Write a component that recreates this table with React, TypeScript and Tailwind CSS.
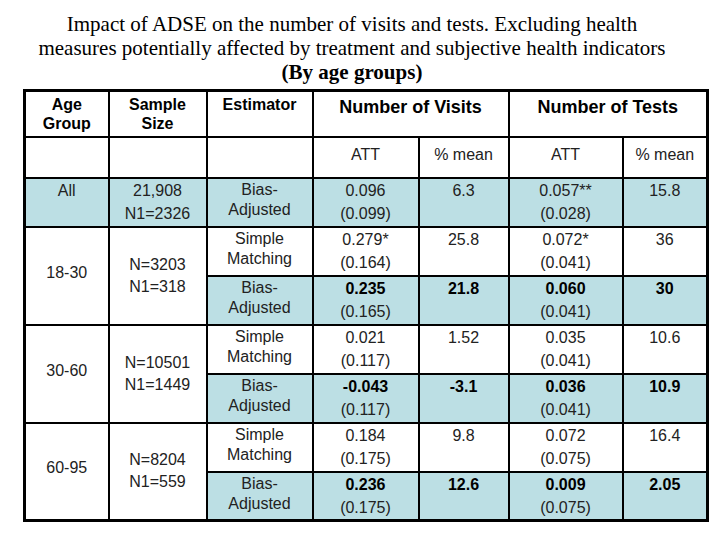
import React from "react";

type Row = {
  est: [string, string];
  bold: boolean;
  visitAtt: string;
  visitSe: string;
  visitPct: string;
  testAtt: string;
  testSe: string;
  testPct: string;
};

const groups: { age: string; size: [string, string]; rows: Row[] }[] = [
  {
    age: "All",
    size: ["21,908", "N1=2326"],
    rows: [
      { est: ["Bias-", "Adjusted"], bold: false, visitAtt: "0.096", visitSe: "(0.099)", visitPct: "6.3", testAtt: "0.057**", testSe: "(0.028)", testPct: "15.8" },
    ],
  },
  {
    age: "18-30",
    size: ["N=3203", "N1=318"],
    rows: [
      { est: ["Simple", "Matching"], bold: false, visitAtt: "0.279*", visitSe: "(0.164)", visitPct: "25.8", testAtt: "0.072*", testSe: "(0.041)", testPct: "36" },
      { est: ["Bias-", "Adjusted"], bold: true, visitAtt: "0.235", visitSe: "(0.165)", visitPct: "21.8", testAtt: "0.060", testSe: "(0.041)", testPct: "30" },
    ],
  },
  {
    age: "30-60",
    size: ["N=10501", "N1=1449"],
    rows: [
      { est: ["Simple", "Matching"], bold: false, visitAtt: "0.021", visitSe: "(0.117)", visitPct: "1.52", testAtt: "0.035", testSe: "(0.041)", testPct: "10.6" },
      { est: ["Bias-", "Adjusted"], bold: true, visitAtt: "-0.043", visitSe: "(0.117)", visitPct: "-3.1", testAtt: "0.036", testSe: "(0.041)", testPct: "10.9" },
    ],
  },
  {
    age: "60-95",
    size: ["N=8204", "N1=559"],
    rows: [
      { est: ["Simple", "Matching"], bold: false, visitAtt: "0.184", visitSe: "(0.175)", visitPct: "9.8", testAtt: "0.072", testSe: "(0.075)", testPct: "16.4" },
      { est: ["Bias-", "Adjusted"], bold: true, visitAtt: "0.236", visitSe: "(0.175)", visitPct: "12.6", testAtt: "0.009", testSe: "(0.075)", testPct: "2.05" },
    ],
  },
];

const td = "border-2 border-black text-center align-top p-0";

function DataCells({ row, shaded }: { row: Row; shaded: boolean }) {
  const bg = shaded ? "bg-[#bcdfe4]" : "bg-white";
  const strong = row.bold ? "font-bold text-black" : "text-[#222]";
  return (
    <>
      <td className={`${td} ${bg} leading-[20px] pt-[1px]`}>
        {row.est[0]}
        <br />
        {row.est[1]}
      </td>
      <td className={`${td} ${bg} leading-[23px]`}>
        <span className={strong}>{row.visitAtt}</span>
        <br />
        {row.visitSe}
      </td>
      <td className={`${td} ${bg} leading-[23px] ${strong}`}>{row.visitPct}</td>
      <td className={`${td} ${bg} leading-[23px]`}>
        <span className={strong}>{row.testAtt}</span>
        <br />
        {row.testSe}
      </td>
      <td className={`${td} ${bg} leading-[23px] ${strong}`}>{row.testPct}</td>
    </>
  );
}

export default function App() {
  return (
    <div className="w-[720px] h-[540px] bg-white overflow-hidden">
      <div className="pt-[12px] pr-[16px] text-center text-black font-['Liberation_Serif',serif] text-[21px] leading-[24px]">
        <p>Impact of ADSE on the number of visits and tests. Excluding health</p>
        <p>measures potentially affected by treatment and subjective health indicators</p>
        <p className="font-bold">(By age groups)</p>
      </div>
      <table className="ml-[23px] mt-[5px] w-[683px] table-fixed border-collapse border-[3px] border-black font-['Liberation_Sans',Arial,sans-serif] text-[16px] text-[#222]">
        <colgroup>
          <col className="w-[84px]" />
          <col className="w-[98px]" />
          <col className="w-[106px]" />
          <col className="w-[106px]" />
          <col className="w-[90px]" />
          <col className="w-[114px]" />
          <col className="w-[85px]" />
        </colgroup>
        <thead>
          <tr className="h-[46px]">
            <th className={`${td} font-bold text-black leading-[19px] pt-[3px]`}>
              Age
              <br />
              Group
            </th>
            <th className={`${td} font-bold text-black leading-[19px] pt-[3px]`}>
              Sample
              <br />
              Size
            </th>
            <th className={`${td} font-bold text-black leading-[19px] pt-[3px]`}>Estimator</th>
            <th colSpan={2} className={`${td} font-bold text-black text-[18px] leading-[20px] pt-[5px]`}>
              Number of Visits
            </th>
            <th colSpan={2} className={`${td} font-bold text-black text-[18px] leading-[20px] pt-[5px]`}>
              Number of Tests
            </th>
          </tr>
          <tr className="h-[41px]">
            <td className={td}></td>
            <td className={td}></td>
            <td className={td}></td>
            <td className={`${td} pt-[5px]`}>ATT</td>
            <td className={`${td} pt-[5px]`}>% mean</td>
            <td className={`${td} pt-[5px]`}>ATT</td>
            <td className={`${td} pt-[5px]`}>% mean</td>
          </tr>
        </thead>
        <tbody>
          {groups.map((g) =>
            g.rows.map((row, i) => {
              const shaded = row.est[0] === "Bias-";
              return (
                <tr key={g.age + i} className="h-[49px]">
                  {i === 0 && (
                    <>
                      <td
                        rowSpan={g.rows.length}
                        className={`${td} ${g.rows.length === 1 ? "bg-[#bcdfe4] leading-[23px]" : "bg-white !align-middle leading-[22px] pb-[6px]"}`}
                      >
                        {g.age}
                      </td>
                      <td
                        rowSpan={g.rows.length}
                        className={`${td} ${g.rows.length === 1 ? "bg-[#bcdfe4] leading-[23px]" : "bg-white !align-middle leading-[22px]"}`}
                      >
                        {g.size[0]}
                        <br />
                        {g.size[1]}
                      </td>
                    </>
                  )}
                  <DataCells row={row} shaded={shaded} />
                </tr>
              );
            })
          )}
        </tbody>
      </table>
    </div>
  );
}
